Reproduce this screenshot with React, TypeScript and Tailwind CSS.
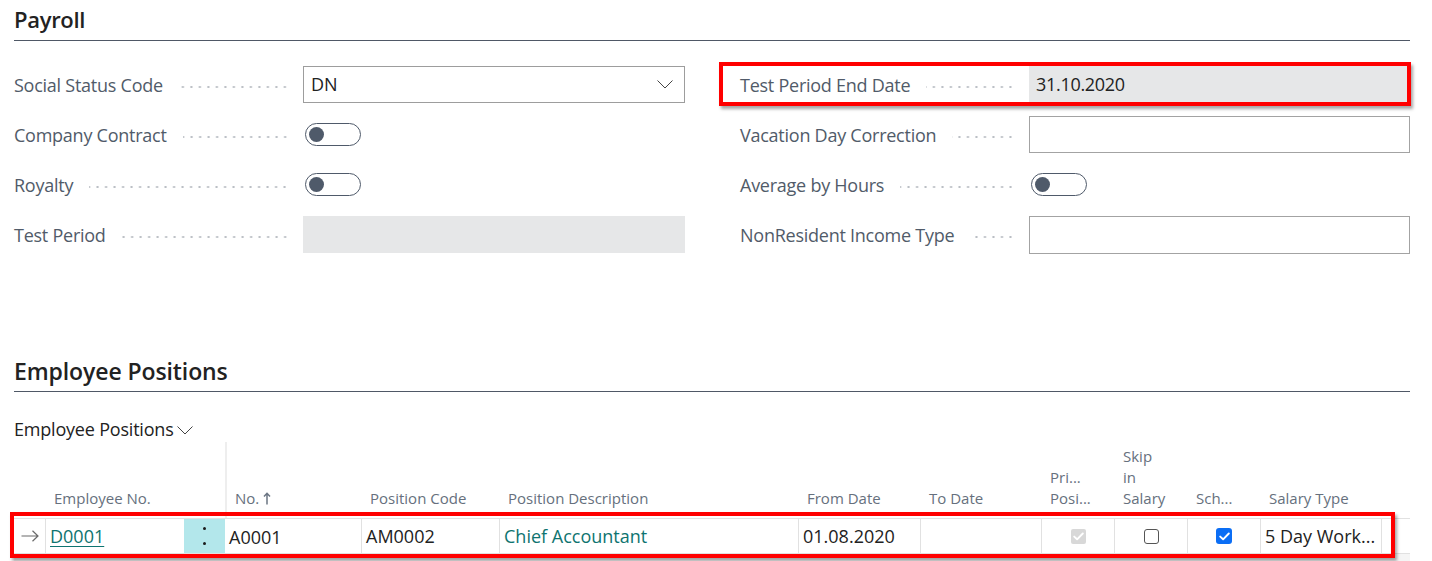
import React from "react";

const Dots = () => (
  <span className="flex-1 h-[4px] ml-[16px] mt-[3px] bg-[radial-gradient(circle,#b9bdc3_0.9px,transparent_1.3px)] bg-[length:8.5px_4px] bg-repeat-x bg-right" />
);

const Toggle = () => (
  <div className="ml-[2px] w-[56px] h-[23px] rounded-full border-[1.5px] border-[#4f5a6a] flex items-center pl-[3px] bg-white">
    <div className="w-[15px] h-[15px] rounded-full bg-[#4f5a6a]" />
  </div>
);

const Row = ({ label, children }: { label: string; children?: React.ReactNode }) => (
  <div className="flex items-center h-[37px]">
    <div className="w-[289px] flex items-center pr-[14px] pt-[2px]">
      <span className="text-[18px] text-[#515b69] whitespace-nowrap tracking-[-0.25px]">{label}</span>
      <Dots />
    </div>
    <div className="flex-1 h-full flex items-center">{children}</div>
  </div>
);

const Chevron = ({ className }: { className?: string }) => (
  <svg className={className} width="16" height="9" viewBox="0 0 16 9" fill="none">
    <path d="M0.5 0.5 L8 8 L15.5 0.5" stroke="#444" strokeWidth="1" />
  </svg>
);

const cols = [
  { w: 32 },
  { w: 138 },
  { w: 41 },
  { w: 137 },
  { w: 138 },
  { w: 299 },
  { w: 122 },
  { w: 121 },
  { w: 73 },
  { w: 73 },
  { w: 73 },
  { w: 121 },
  { w: 28 },
];

const CheckMark = ({ color }: { color: string }) => (
  <svg width="11" height="9" viewBox="0 0 11 9" fill="none">
    <path d="M1.2 4.6 L4.1 7.3 L9.8 1.5" stroke={color} strokeWidth="1.9" strokeLinecap="round" strokeLinejoin="round" />
  </svg>
);

export default function App() {
  const headers: React.ReactNode[] = [
    null,
    <span>Employee No.</span>,
    null,
    <span className="flex items-center gap-[4px]">
      No.
      <svg width="8" height="13" viewBox="0 0 8 13" fill="none">
        <path d="M4 12.5 V1.5 M1 4.5 L4 1.3 L7 4.5" stroke="#6b7583" strokeWidth="1.5" />
      </svg>
    </span>,
    <span>Position Code</span>,
    <span>Position Description</span>,
    <span>From Date</span>,
    <span>To Date</span>,
    <span className="block leading-[21px]">Pri...<br />Posi...</span>,
    <span className="block leading-[21px]">Skip<br />in<br />Salary</span>,
    <span>Sch...</span>,
    <span>Salary Type</span>,
    null,
  ];

  return (
    <div className="w-[1432px] h-[561px] bg-white overflow-hidden font-['Open_Sans',sans-serif] relative">
      <div className="pl-[14px] pr-[22px]">
        {/* Payroll */}
        <div className="h-[41px] flex items-center border-b border-[#4f5866] pb-[1px]">
          <h2 className="text-[22px] font-semibold text-[#222] tracking-[-0.3px]">Payroll</h2>
        </div>
        <div className="mt-[25px] grid grid-cols-[671px_670px] gap-x-[55px]">
          <div className="flex flex-col gap-[13px]">
            <Row label="Social Status Code">
              <div className="w-full h-full border border-[#9d9d9d] flex items-center justify-between pl-[7px] pr-[11px]">
                <span className="text-[18px] text-[#222]">DN</span>
                <Chevron />
              </div>
            </Row>
            <Row label="Company Contract">
              <Toggle />
            </Row>
            <Row label="Royalty">
              <Toggle />
            </Row>
            <Row label="Test Period">
              <div className="w-full h-full bg-[#e6e7e8]" />
            </Row>
          </div>
          <div className="flex flex-col gap-[13px]">
            <div className="relative">
              <Row label="Test Period End Date">
                <div className="w-full h-[38px] bg-[#e6e7e8] flex items-center pl-[7px]">
                  <span className="text-[18px] text-[#222] tracking-[-0.3px]">31.10.2020</span>
                </div>
              </Row>
              <div className="absolute left-[-21px] top-[-4px] right-[-1px] bottom-[-3px] border-[4px] border-[#ff0000] shadow-[2px_3px_3px_rgba(0,0,0,0.35)]" />
            </div>
            <Row label="Vacation Day Correction">
              <div className="w-full h-full border border-[#a3a3a3]" />
            </Row>
            <Row label="Average by Hours">
              <Toggle />
            </Row>
            <Row label="NonResident Income Type">
              <div className="w-full h-[38px] border border-[#a3a3a3]" />
            </Row>
          </div>
        </div>

        {/* Employee Positions */}
        <div className="mt-[98px] h-[41px] flex items-center border-b border-[#4f5866]">
          <h2 className="text-[23px] font-semibold text-[#222] tracking-[-0.1px]">Employee Positions</h2>
        </div>
        <div className="mt-[25px] h-[24px] flex items-center gap-[3px]">
          <span className="text-[18px] text-[#222] tracking-[-0.2px]">Employee Positions</span>
          <Chevron className="mt-[2px]" />
        </div>

        <div className="mt-[1px]">
          {/* header */}
          <div className="flex h-[76px]">
            {cols.map((c, i) => (
              <div
                key={i}
                style={{ width: c.w }}
                className={`shrink-0 flex items-end pb-[9px] pl-[8px] text-[15px] leading-[21px] text-[#66707d] whitespace-nowrap ${i === 3 ? "border-l-2 border-[#eeeeee] pl-[6px]" : ""}`}
              >
                {headers[i]}
              </div>
            ))}
          </div>
          {/* row */}
          <div className="relative">
            <div className="flex h-[36px] border-t border-b border-[#e1e1e1] bg-white text-[18px] text-[#222]">
              <div style={{ width: 32 }} className="shrink-0 flex items-center justify-center border-r border-[#e1e1e1]">
                <svg width="18" height="12" viewBox="0 0 18 12" fill="none">
                  <path d="M0.5 6 H17 M11.5 0.7 L17 6 L11.5 11.3" stroke="#6a6a6a" strokeWidth="1.2" />
                </svg>
              </div>
              <div style={{ width: 138 }} className="shrink-0 flex items-center pl-[4px]">
                <span className="text-[#0e7470] underline underline-offset-[3px] decoration-[1px]">D0001</span>
              </div>
              <div style={{ width: 41 }} className="shrink-0 bg-[#b3e7eb] flex flex-col items-center justify-center gap-[12px]">
                <span className="w-[3px] h-[3px] rounded-full bg-[#1b1b1b]" />
                <span className="w-[3px] h-[3px] rounded-full bg-[#1b1b1b]" />
              </div>
              <div style={{ width: 137 }} className="shrink-0 flex items-center pl-[4px] pt-[2px] border-r border-[#e1e1e1]">A0001</div>
              <div style={{ width: 138 }} className="shrink-0 flex items-center pl-[4px] border-r border-[#e1e1e1]">AM0002</div>
              <div style={{ width: 299 }} className="shrink-0 flex items-center pl-[4px] text-[#0e7470] border-r border-[#e1e1e1]">Chief Accountant</div>
              <div style={{ width: 122 }} className="shrink-0 flex items-center pl-[4px] border-r border-[#e1e1e1]">01.08.2020</div>
              <div style={{ width: 121 }} className="shrink-0 border-r border-[#e1e1e1]" />
              <div style={{ width: 73 }} className="shrink-0 flex items-center justify-center border-r border-[#e1e1e1]">
                <div className="w-[15px] h-[15px] rounded-[2px] bg-[#d8d8d8] flex items-center justify-center">
                  <CheckMark color="#ffffff" />
                </div>
              </div>
              <div style={{ width: 73 }} className="shrink-0 flex items-center justify-center border-r border-[#e1e1e1]">
                <div className="w-[15px] h-[15px] rounded-[3px] border border-[#555] bg-white" />
              </div>
              <div style={{ width: 73 }} className="shrink-0 flex items-center justify-center border-r border-[#e1e1e1]">
                <div className="w-[16px] h-[16px] rounded-[3px] bg-[#0b6ef5] flex items-center justify-center">
                  <CheckMark color="#ffffff" />
                </div>
              </div>
              <div style={{ width: 121 }} className="shrink-0 flex items-center pl-[4px] border-r border-[#e1e1e1] whitespace-nowrap overflow-hidden">5 Day Work...</div>
              <div className="flex-1" />
            </div>
            <div className="absolute left-[-4px] top-[-6px] right-[15px] bottom-[-4px] border-[4px] border-[#ff0000] shadow-[2px_3px_3px_rgba(0,0,0,0.35)]" />
          </div>
          <div className="h-[10px] bg-[#f5f5f5]" />
        </div>
      </div>
    </div>
  );
}
